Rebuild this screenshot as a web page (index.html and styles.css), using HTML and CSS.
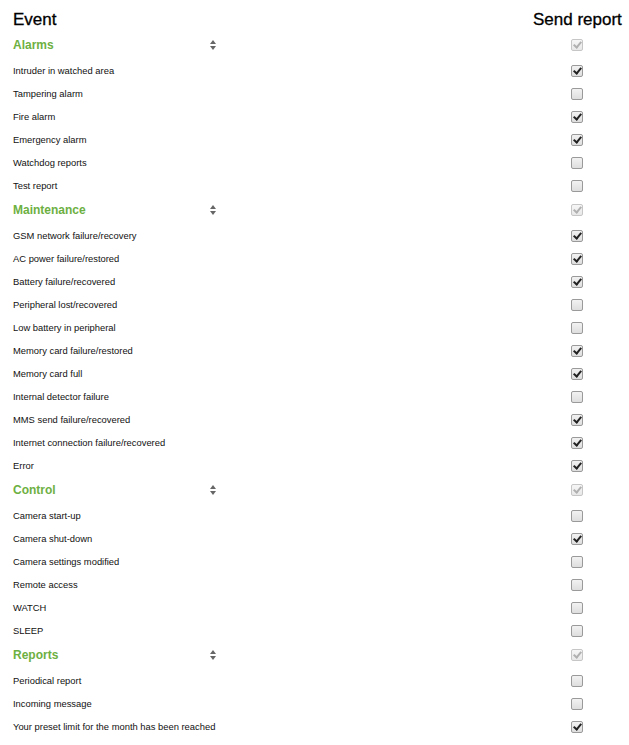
FILE: index.html
```html
<!DOCTYPE html>
<html>
<head>
<meta charset="utf-8">
<link rel="stylesheet" href="styles.css">
</head>
<body>
<div class="table">
  <div class="head">
    <div class="h-event">Event</div>
    <div class="h-send">Send report</div>
  </div>

  <div class="group">
    <div class="g-name"><span>Alarms</span><span class="sort"></span></div>
    <div class="cell"><span class="cb on dis"></span></div>
  </div>
  <div class="row"><div class="name">Intruder in watched area</div><div class="cell"><span class="cb on"></span></div></div>
  <div class="row"><div class="name">Tampering alarm</div><div class="cell"><span class="cb"></span></div></div>
  <div class="row"><div class="name">Fire alarm</div><div class="cell"><span class="cb on"></span></div></div>
  <div class="row"><div class="name">Emergency alarm</div><div class="cell"><span class="cb on"></span></div></div>
  <div class="row"><div class="name">Watchdog reports</div><div class="cell"><span class="cb"></span></div></div>
  <div class="row"><div class="name">Test report</div><div class="cell"><span class="cb"></span></div></div>

  <div class="group">
    <div class="g-name"><span>Maintenance</span><span class="sort"></span></div>
    <div class="cell"><span class="cb on dis"></span></div>
  </div>
  <div class="row"><div class="name">GSM network failure/recovery</div><div class="cell"><span class="cb on"></span></div></div>
  <div class="row"><div class="name">AC power failure/restored</div><div class="cell"><span class="cb on"></span></div></div>
  <div class="row"><div class="name">Battery failure/recovered</div><div class="cell"><span class="cb on"></span></div></div>
  <div class="row"><div class="name">Peripheral lost/recovered</div><div class="cell"><span class="cb"></span></div></div>
  <div class="row"><div class="name">Low battery in peripheral</div><div class="cell"><span class="cb"></span></div></div>
  <div class="row"><div class="name">Memory card failure/restored</div><div class="cell"><span class="cb on"></span></div></div>
  <div class="row"><div class="name">Memory card full</div><div class="cell"><span class="cb on"></span></div></div>
  <div class="row"><div class="name">Internal detector failure</div><div class="cell"><span class="cb"></span></div></div>
  <div class="row"><div class="name">MMS send failure/recovered</div><div class="cell"><span class="cb on"></span></div></div>
  <div class="row"><div class="name">Internet connection failure/recovered</div><div class="cell"><span class="cb on"></span></div></div>
  <div class="row"><div class="name">Error</div><div class="cell"><span class="cb on"></span></div></div>

  <div class="group">
    <div class="g-name"><span>Control</span><span class="sort"></span></div>
    <div class="cell"><span class="cb on dis"></span></div>
  </div>
  <div class="row"><div class="name">Camera start-up</div><div class="cell"><span class="cb"></span></div></div>
  <div class="row"><div class="name">Camera shut-down</div><div class="cell"><span class="cb on"></span></div></div>
  <div class="row"><div class="name">Camera settings modified</div><div class="cell"><span class="cb"></span></div></div>
  <div class="row"><div class="name">Remote access</div><div class="cell"><span class="cb"></span></div></div>
  <div class="row"><div class="name">WATCH</div><div class="cell"><span class="cb"></span></div></div>
  <div class="row"><div class="name">SLEEP</div><div class="cell"><span class="cb"></span></div></div>

  <div class="group">
    <div class="g-name"><span>Reports</span><span class="sort"></span></div>
    <div class="cell"><span class="cb on dis"></span></div>
  </div>
  <div class="row"><div class="name">Periodical report</div><div class="cell"><span class="cb"></span></div></div>
  <div class="row"><div class="name">Incoming message</div><div class="cell"><span class="cb"></span></div></div>
  <div class="row"><div class="name">Your preset limit for the month has been reached</div><div class="cell"><span class="cb on"></span></div></div>
</div>
</body>
</html>
```

FILE: styles.css
```css
html, body {
  margin: 0;
  padding: 0;
  background: #ffffff;
}
body {
  font-family: "Liberation Sans", Arial, sans-serif;
  color: #111111;
}
.table {
  margin: 8px 8px 0 8px;
  display: flex;
  flex-direction: column;
}
.head, .group, .row {
  display: grid;
  grid-template-columns: 1fr 88px;
  align-items: center;
}
.head {
  height: 24px;
  font-size: 17px;
  color: #000000;
  -webkit-text-stroke: 0.3px #000000;
}
.h-event {
  padding-left: 5px;
}
.h-send {
  text-align: right;
  white-space: nowrap;
}
.group {
  height: 27px;
  padding-bottom: 2px;
  box-sizing: border-box;
}
.g-name {
  width: 210px;
  padding-left: 5px;
  box-sizing: border-box;
  display: flex;
  justify-content: space-between;
  align-items: center;
  font-size: 12px;
  font-weight: bold;
  color: #6db042;
}
.sort {
  position: relative;
  width: 6px;
  height: 10px;
  margin-right: 2px;
}
.sort::before, .sort::after {
  content: "";
  position: absolute;
  left: 0;
  border-left: 3px solid transparent;
  border-right: 3px solid transparent;
}
.sort::before {
  top: 0;
  border-bottom: 4px solid #666666;
}
.sort::after {
  bottom: 0;
  border-top: 4px solid #666666;
}
.row {
  height: 23px;
}
.name {
  padding-left: 5px;
  font-size: 9.4px;
  color: #111111;
}
.cell {
  display: flex;
  justify-content: center;
  align-items: center;
}
.cb {
  width: 12px;
  height: 12px;
  box-sizing: border-box;
  border: 1px solid #9a9a9a;
  border-radius: 2px;
  background: linear-gradient(#f2f2f2, #dedede);
  position: relative;
}
.cb.on::after {
  content: "";
  position: absolute;
  left: 3px;
  top: 0px;
  width: 3px;
  height: 6px;
  border-right: 2px solid #222222;
  border-bottom: 2px solid #222222;
  transform: rotate(40deg);
}
.cb.dis {
  border-color: #c6c6c6;
  background: linear-gradient(#f6f6f6, #e8e8e8);
}
.cb.dis::after {
  border-color: #b0b0b0;
}
```
